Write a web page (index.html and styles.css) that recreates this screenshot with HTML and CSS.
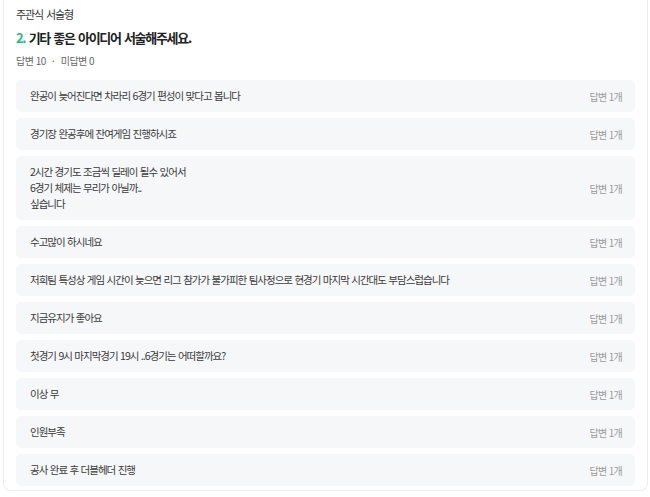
FILE: index.html
```html
<!DOCTYPE html>
<html lang="ko">
<head>
    <meta charset="UTF-8">
    <meta name="viewport" content="width=device-width, initial-scale=1.0">
    <title>주관식 서술형</title>
    <link rel="stylesheet" href="styles.css">
</head>
<body>
    <div class="card">
        <div class="type">주관식 서술형</div>
        <h2 class="question"><span class="num">2.</span> 기타 좋은 아이디어 서술해주세요.</h2>
        <div class="stats">답변 10 <span class="dot">·</span> 미답변 0</div>

        <ul class="answers">
            <li><p>완공이 늦어진다면 차라리 6경기 편성이 맞다고 봅니다</p><span class="count">답변 1개</span></li>
            <li><p>경기장 완공후에 잔여게임 진행하시죠</p><span class="count">답변 1개</span></li>
            <li><p>2시간 경기도 조금씩 딜레이 될수 있어서<br>6경기 체제는 무리가 아닐까..<br>싶습니다</p><span class="count">답변 1개</span></li>
            <li><p>수고많이 하시네요</p><span class="count">답변 1개</span></li>
            <li><p>저희팀 특성상 게임 시간이 늦으면 리그 참가가 불가피한 팀사정으로 현경기 마지막 시간대도 부담스럽습니다</p><span class="count">답변 1개</span></li>
            <li><p>지금유지가 좋아요</p><span class="count">답변 1개</span></li>
            <li><p>첫경기 9시 마지막경기 19시 ..6경기는 어떠할까요?</p><span class="count">답변 1개</span></li>
            <li><p>이상 무</p><span class="count">답변 1개</span></li>
            <li><p>인원부족</p><span class="count">답변 1개</span></li>
            <li><p>공사 완료 후 더블헤더 진행</p><span class="count">답변 1개</span></li>
        </ul>
    </div>
</body>
</html>
```

FILE: styles.css
```css
body {
    margin: 0;
    padding: 0 2px 0 3px;
    background-color: #fff;
    font-family: "Noto Sans CJK KR", "Noto Sans", sans-serif;
    color: #333;
}
.card {
    border: 1px solid #eceef1;
    border-top: none;
    border-radius: 0 0 8px 8px;
    padding: 6px 12px 4px 12px;
}
.type {
    font-size: 11px;
    line-height: 16px;
    letter-spacing: -1.1px;
    word-spacing: 1px;
    color: #333;
}
.question {
    margin: 6px 0 0 0;
    font-size: 13px;
    line-height: 20px;
    font-weight: 700;
    letter-spacing: -1.3px;
    word-spacing: 1px;
    color: #222;
}
.question .num {
    color: #2eb67d;
}
.stats {
    margin-top: 6px;
    font-size: 10px;
    line-height: 14px;
    letter-spacing: -0.5px;
    color: #666;
}
.stats .dot {
    margin: 0 4px;
}
.answers {
    list-style: none;
    margin: 12px 0 0 0;
    padding: 0;
    display: flex;
    flex-direction: column;
    gap: 6px;
}
.answers li {
    display: flex;
    align-items: center;
    justify-content: space-between;
    background-color: #f6f7f9;
    border-radius: 5px;
    padding: 8px 13px 8px 14px;
}
.answers p {
    margin: 0;
    font-size: 10.5px;
    line-height: 16px;
    letter-spacing: -1px;
    word-spacing: 0.5px;
    color: #3a3a3a;
}
.count {
    font-size: 10px;
    letter-spacing: -0.7px;
    color: #9a9a9a;
    white-space: nowrap;
}
```
